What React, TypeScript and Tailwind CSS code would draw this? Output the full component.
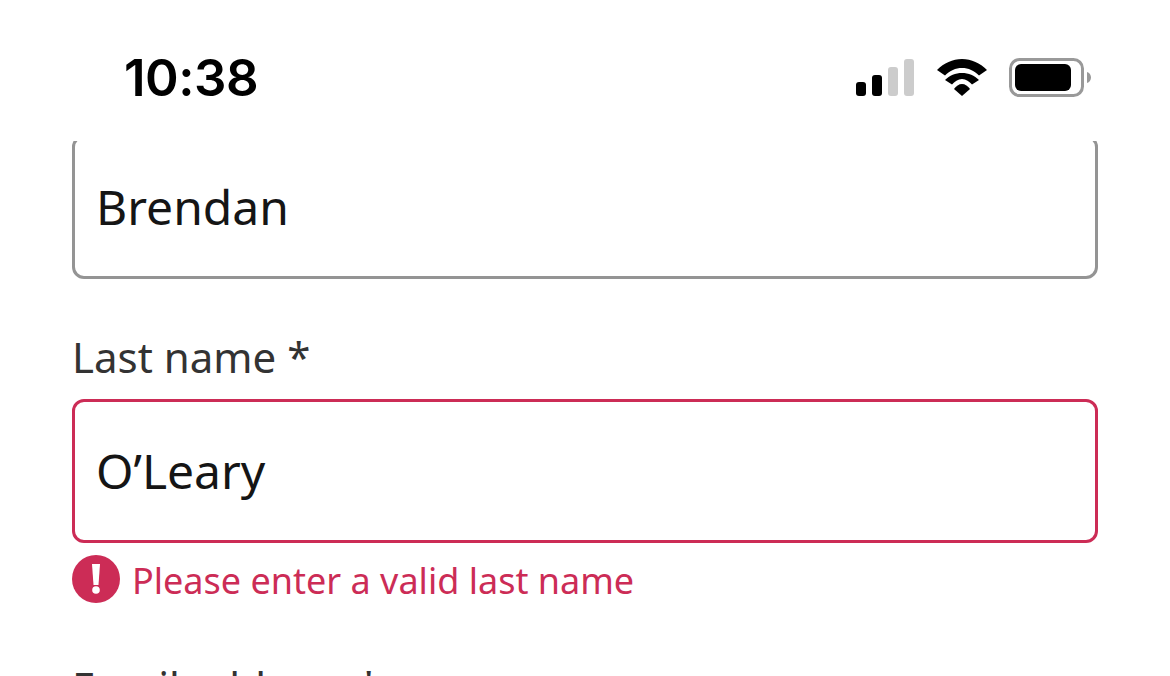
const font = "font-['Noto_Sans','Open_Sans',sans-serif]";

function StatusBar() {
  return (
    <div className="relative z-10 flex h-[141px] items-start justify-between bg-white pl-[124px] pr-[79px]">
      <span className="mt-[47px] font-['Inter',sans-serif] text-[51px] font-semibold leading-[62px] tracking-[-0.5px] text-black">
        10:38
      </span>
      <div className="mt-[58px] flex items-start">
        <svg width="58" height="37" viewBox="0 0 58 37" className="mt-px">
          <rect x="0" y="23" width="10" height="14" rx="3" fill="#000" />
          <rect x="16" y="16" width="10" height="21" rx="3" fill="#000" />
          <rect x="32" y="8" width="10" height="29" rx="3" fill="#ccc" />
          <rect x="48" y="0" width="10" height="37" rx="3" fill="#ccc" />
        </svg>
        <svg width="50" height="37" viewBox="0 0 50 37" className="ml-[23px] mt-px">
          <path d="M0 11C7 4 15.500 0 25 0s18 4 25 11l-8 5.500C37 11.500 31.500 9 25 9S13 11.500 8 16.500z" fill="#000" />
          <path d="M8 21c4.500-4.500 10.500-7 17-7s12.500 2.500 17 7l-7 4.500c-2.500-3-6-5.500-10-5.500s-7.500 2.500-10 5.500z" fill="#000" />
          <path d="M17 30c2-3 5-5 8-5s6 2 8 5l-8 7z" fill="#000" />
        </svg>
        <svg width="82" height="39" viewBox="0 0 82 39" className="ml-[22px]">
          <rect x="1.500" y="1.500" width="72" height="36" rx="9" fill="#fff" stroke="#999" strokeWidth="3" />
          <rect x="6" y="6" width="56" height="27" rx="6" fill="#000" />
          <path d="M78 14c2.500 .8 4 3 4 5.500s-1.500 4.700-4 5.500z" fill="#999" />
        </svg>
      </div>
    </div>
  );
}

function ErrorIcon() {
  return (
    <svg width="48" height="48" viewBox="0 0 48 48" className="shrink-0">
      <circle cx="24" cy="24" r="24" fill="#cc2c56" />
      <path d="M20 9h8l-1.500 21h-5z" fill="#fff" />
      <circle cx="24" cy="35" r="3.800" fill="#fff" />
    </svg>
  );
}

export default function App() {
  return (
    <div className={`${font} h-[676px] w-[1170px] overflow-hidden bg-white`}>
      <StatusBar />
      <div className="-mt-[6px] flex flex-col px-[72px]">
        <div className="flex h-[144px] items-center rounded-[12px] border-[3px] border-[#949494] px-[21px] text-[48px] leading-[64px] text-[#151515]">
          Brendan
        </div>
        <label className="mt-[45px] text-[42px] leading-[66px] text-[#333]">Last name *</label>
        <div className="mt-[9px] flex h-[144px] items-center rounded-[12px] border-[3px] border-[#cc2c56] px-[21px] text-[48px] leading-[64px] text-[#151515]">
          O’Leary
        </div>
        <div className="mt-[12px] flex items-start gap-[12px] text-[#cc2c56]">
          <ErrorIcon />
          <span className="mt-[2px] text-[36px] leading-[48px]">Please enter a valid last name</span>
        </div>
        <label className="mt-[49px] text-[42px] leading-[66px] text-[#333]">Email address *</label>
      </div>
    </div>
  );
}
